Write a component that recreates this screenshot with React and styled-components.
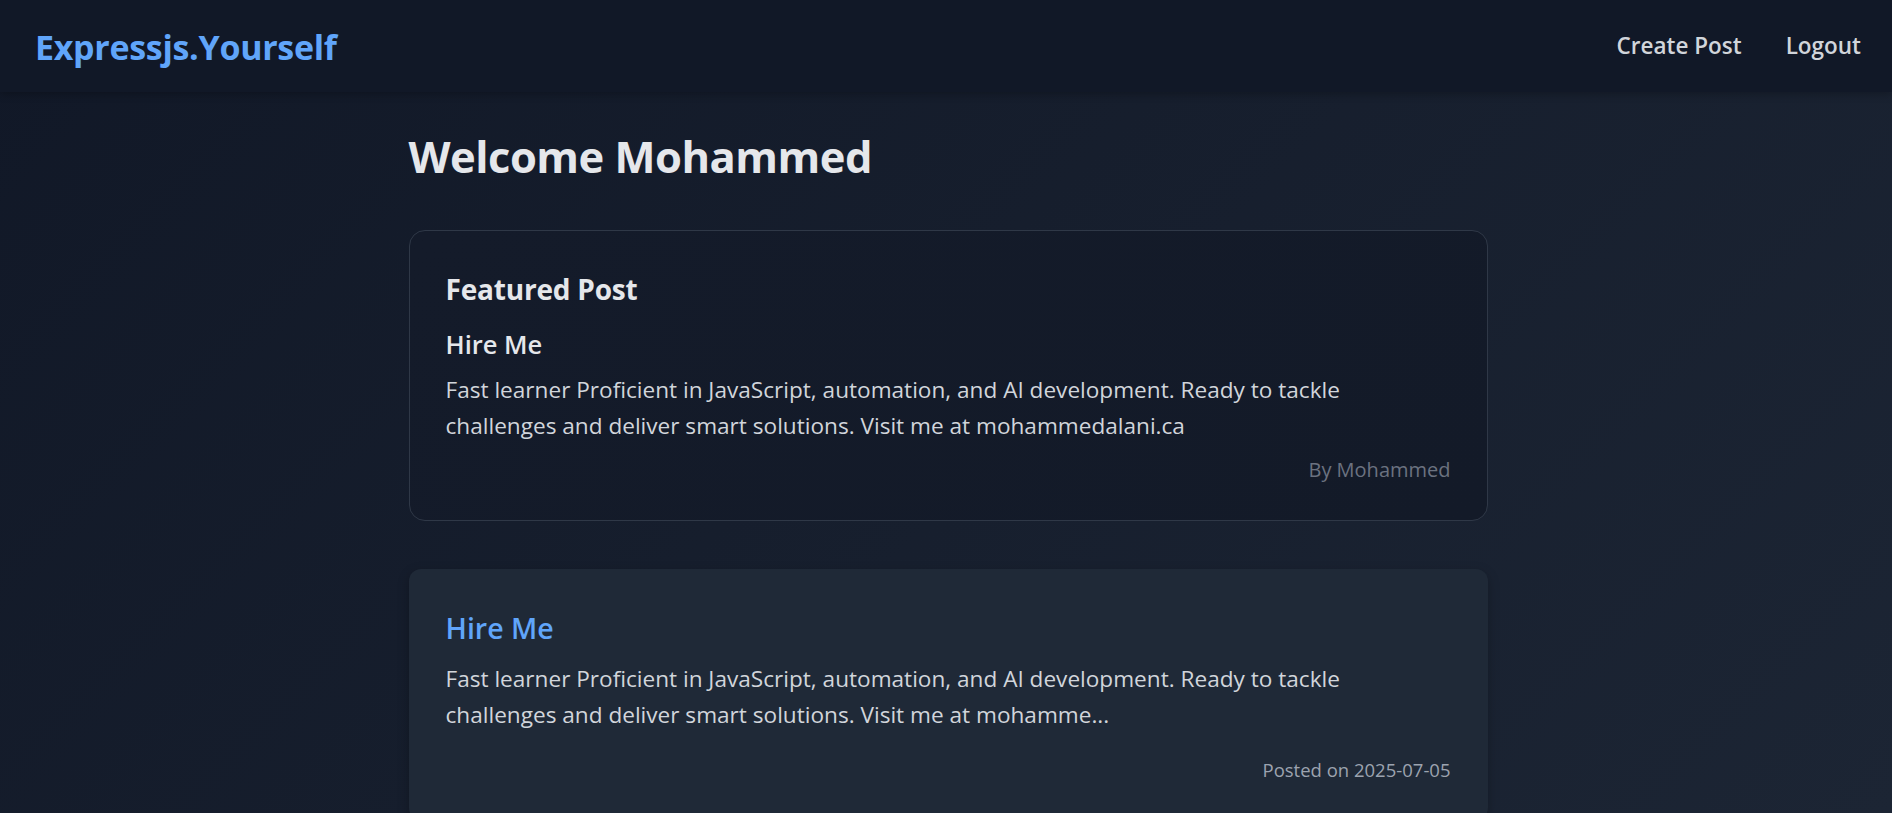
import React from "react";
import styled, { createGlobalStyle } from "styled-components";

const GlobalStyle = createGlobalStyle`
  * { box-sizing: border-box; }
  html, body { margin: 0; padding: 0; }
  body {
    font-family: "Segoe UI", "Open Sans", "Noto Sans", sans-serif;
    background: linear-gradient(135deg, #111827 0%, #1c2534 100%);
    background-attachment: fixed;
    color: #e5e7eb;
    min-height: 100vh;
  }
`;

const Page = styled.div`
  min-height: 100vh;
  display: flex;
  flex-direction: column;
`;

const NavBar = styled.nav`
  height: 92px;
  display: flex;
  align-items: center;
  justify-content: space-between;
  padding: 1px 31px 0 35px;
  background: #111827;
  box-shadow: 0 2px 8px rgba(0, 0, 0, 0.25);
`;

const Logo = styled.a`
  font-size: 34px;
  font-weight: 700;
  letter-spacing: -0.3px;
  color: #60a5fa;
  text-decoration: none;
  line-height: 1;
`;

const NavLinks = styled.div`
  display: flex;
  align-items: center;
  gap: 44px;
`;

const NavLink = styled.a`
  font-size: 22.5px;
  font-weight: 600;
  color: #d1d5db;
  text-decoration: none;
  line-height: 1;
`;

const Main = styled.main`
  width: 1083px;
  padding: 38px 0 0 4px;
  margin: 0 auto;
  display: flex;
  flex-direction: column;
`;

const Title = styled.h1`
  margin: 0 0 46px;
  font-size: 43.5px;
  line-height: 54px;
  font-weight: 700;
  letter-spacing: -0.5px;
  color: #e5e7eb;
`;

const Card = styled.section`
  border-radius: ${(p) => (p.$featured ? "16px" : "12px")};
  border: 1px solid ${(p) => (p.$featured ? "#2f3847" : "transparent")};
  background: ${(p) =>
    p.$featured
      ? "linear-gradient(135deg, #141b2a 0%, #131a28 100%)"
      : "#1f2937"};
  box-shadow: ${(p) =>
    p.$featured ? "none" : "0 4px 12px rgba(0, 0, 0, 0.25)"};
  padding: 40px 36px 35px;
  margin-bottom: 48px;
  display: flex;
  flex-direction: column;
`;

const CardLabel = styled.h2`
  margin: 0 0 22px;
  font-size: 28px;
  line-height: 36px;
  font-weight: 700;
  letter-spacing: -0.2px;
  color: #e5e7eb;
`;

const PostTitle = styled.h3`
  margin: 0 0 ${(p) => (p.$link ? "15px" : "12px")};
  font-size: ${(p) => (p.$link ? "28.5px" : "25.5px")};
  line-height: ${(p) => (p.$link ? "36px" : "31px")};
  font-weight: 600;
  color: ${(p) => (p.$link ? "#60a5fa" : "#e5e7eb")};
`;

const Body = styled.p`
  margin: 0;
  font-size: 22.6px;
  line-height: 35.5px;
  color: #d1d5db;
`;

const Meta = styled.div`
  margin-top: ${(p) => p.$gap || "12px"};
  text-align: right;
  font-size: ${(p) => p.$size || "20px"};
  line-height: ${(p) => p.$lh || "30px"};
  color: ${(p) => p.$color || "#6b7280"};
`;

export default function App() {
  return (
    <>
      <GlobalStyle />
      <Page>
        <NavBar>
          <Logo href="#">Expressjs.Yourself</Logo>
          <NavLinks>
            <NavLink href="#">Create Post</NavLink>
            <NavLink href="#">Logout</NavLink>
          </NavLinks>
        </NavBar>
        <Main>
          <Title>Welcome Mohammed</Title>
          <Card $featured>
            <CardLabel>Featured Post</CardLabel>
            <PostTitle>Hire Me</PostTitle>
            <Body>
              Fast learner Proficient in JavaScript, automation, and AI
              development. Ready to tackle challenges and deliver smart
              solutions. Visit me at mohammedalani.ca
            </Body>
            <Meta>By Mohammed</Meta>
          </Card>
          <Card>
            <PostTitle $link>Hire Me</PostTitle>
            <Body>
              Fast learner Proficient in JavaScript, automation, and AI
              development. Ready to tackle challenges and deliver smart
              solutions. Visit me at mohamme...
            </Body>
            <Meta $gap="24px" $size="18.5px" $lh="28px" $color="#9ca3af">
              Posted on 2025-07-05
            </Meta>
          </Card>
        </Main>
      </Page>
    </>
  );
}
